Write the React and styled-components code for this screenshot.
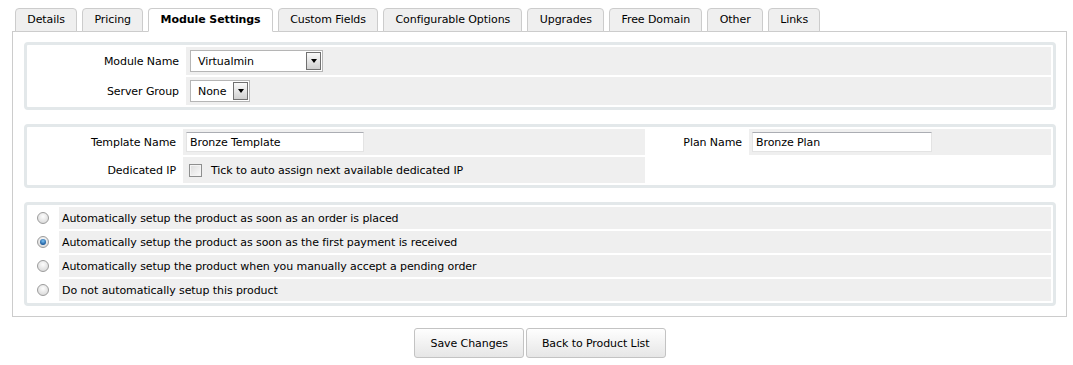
import React from "react";
import styled, { createGlobalStyle } from "styled-components";

const FONT = `"DejaVu Sans", "Liberation Sans", sans-serif`;

const GlobalStyle = createGlobalStyle`
  body {
    margin: 0;
    background: #fff;
    font-family: ${FONT};
    font-size: 11px;
    letter-spacing: -0.08px;
    color: #000;
  }
`;

const Page = styled.div`
  padding: 8px 6px 0 12px;
`;

const TabBar = styled.div`
  display: flex;
  gap: 5px;
  padding-left: 3px;
  margin-bottom: -1px;
  position: relative;
  z-index: 1;
`;

const Tab = styled.div`
  height: 22px;
  line-height: 22px;
  padding: 0 11.3px;
  border: 1px solid #ccc;
  border-bottom-color: ${(p) => (p.active ? "#fff" : "#ccc")};
  border-radius: 4px 4px 0 0;
  background: ${(p) => (p.active ? "#fff" : "#efefef")};
  font-weight: ${(p) => (p.active ? "bold" : "normal")};
  white-space: nowrap;
`;

const Content = styled.div`
  border: 1px solid #ccc;
  padding: 10px 10px 10px 11px;
  display: flex;
  flex-direction: column;
  gap: 14px;
`;

const FormBox = styled.div`
  border: 3px solid #e3e8ea;
  border-radius: 4px;
  padding: 2px;
  background: #fff;
  display: grid;
  gap: 2px;
  grid-template-columns: ${(p) => p.cols};
  grid-auto-rows: ${(p) => p.rowHeight}px;
`;

const Label = styled.div`
  background: #fff;
  display: flex;
  align-items: center;
  justify-content: ${(p) => (p.center ? "center" : "flex-end")};
  padding: 0 5px;
  white-space: nowrap;
  grid-column: ${(p) => (p.span ? `span ${p.span}` : "auto")};
`;

const Field = styled.div`
  background: #efefef;
  display: flex;
  align-items: center;
  padding: 0 3px;
  white-space: nowrap;
`;

const SelectBox = styled.div`
  width: ${(p) => p.width}px;
  height: 22px;
  border: 1px solid #b5b5b5;
  background: #fff;
  display: flex;
  align-items: center;
  justify-content: space-between;
  padding-left: 7px;
  padding-right: 1px;
  margin-left: 1px;
  box-sizing: border-box;
`;

const SelectArrow = styled.span`
  width: 15px;
  height: 18px;
  box-sizing: border-box;
  border: 1px solid #707070;
  background: linear-gradient(#fafafa, #d0d0d0);
  display: flex;
  align-items: center;
  justify-content: center;
  &::after {
    content: "";
    border-left: 3px solid transparent;
    border-right: 3px solid transparent;
    border-top: 4px solid #000;
  }
`;

const TextInput = styled.div`
  width: ${(p) => p.width}px;
  height: 20px;
  box-sizing: border-box;
  border: 1px solid #e3e3e3;
  border-top-color: #abadb3;
  background: #fff;
  padding-left: 3px;
  display: flex;
  align-items: center;
`;

const CheckBox = styled.span`
  width: 13px;
  height: 13px;
  box-sizing: border-box;
  border: 1px solid #8e8f8f;
  background: linear-gradient(135deg, #dcdcdc, #fbfbfb);
  box-shadow: inset 0 0 0 1px #f4f4f4;
  margin: 0 9px 0 3px;
`;

const Radio = styled.span`
  width: 12px;
  height: 12px;
  box-sizing: border-box;
  border-radius: 50%;
  border: 1px solid #9c9c9c;
  background: radial-gradient(circle at 50% 35%, #fdfdfd, #d2d2d2);
  display: flex;
  align-items: center;
  justify-content: center;
  &::after {
    content: "";
    display: ${(p) => (p.checked ? "block" : "none")};
    width: 6px;
    height: 6px;
    border-radius: 50%;
    background: radial-gradient(circle at 50% 35%, #7cc3f5, #1b5a9c 70%, #0e3a6c);
  }
`;

const Buttons = styled.div`
  display: flex;
  justify-content: center;
  gap: 2px;
  padding: 11px 0;
  margin-left: 1px;
`;

const Button = styled.div`
  height: 28px;
  padding: 0 15px;
  border: 1px solid #c3c3c3;
  border-radius: 3px;
  background: linear-gradient(#fefefe, #e6e6e6);
  display: flex;
  align-items: center;
`;

const tabs = [
  "Details",
  "Pricing",
  "Module Settings",
  "Custom Fields",
  "Configurable Options",
  "Upgrades",
  "Free Domain",
  "Other",
  "Links",
];

const options = [
  "Automatically setup the product as soon as an order is placed",
  "Automatically setup the product as soon as the first payment is received",
  "Automatically setup the product when you manually accept a pending order",
  "Do not automatically setup this product",
];

export default function App() {
  return (
    <Page>
      <GlobalStyle />
      <TabBar>
        {tabs.map((t) => (
          <Tab key={t} active={t === "Module Settings"}>
            {t}
          </Tab>
        ))}
      </TabBar>
      <Content>
        <FormBox cols="155px 1fr" rowHeight={28}>
          <Label>Module Name</Label>
          <Field>
            <SelectBox width={133}>
              Virtualmin
              <SelectArrow />
            </SelectBox>
          </Field>
          <Label>Server Group</Label>
          <Field>
            <SelectBox width={60}>
              None
              <SelectArrow />
            </SelectBox>
          </Field>
        </FormBox>

        <FormBox cols="152px 462px 100px 1fr" rowHeight={26}>
          <Label>Template Name</Label>
          <Field>
            <TextInput width={178}>Bronze Template</TextInput>
          </Field>
          <Label>Plan Name</Label>
          <Field>
            <TextInput width={180}>Bronze Plan</TextInput>
          </Field>
          <Label>Dedicated IP</Label>
          <Field>
            <CheckBox />
            Tick to auto assign next available dedicated IP
          </Field>
          <Label span={2} />
        </FormBox>

        <FormBox cols="28px 1fr" rowHeight={22}>
          {options.map((o, i) => (
            <React.Fragment key={o}>
              <Label center>
                <Radio checked={i === 1} />
              </Label>
              <Field>{o}</Field>
            </React.Fragment>
          ))}
        </FormBox>
      </Content>
      <Buttons>
        <Button>Save Changes</Button>
        <Button>Back to Product List</Button>
      </Buttons>
    </Page>
  );
}
